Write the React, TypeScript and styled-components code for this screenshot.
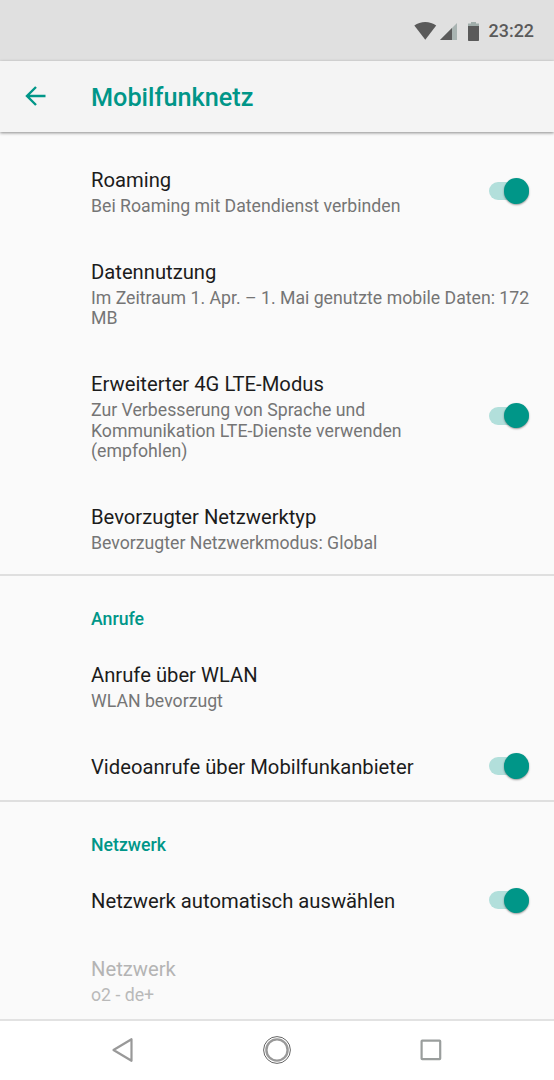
import React from 'react';
import styled, { createGlobalStyle } from 'styled-components';

const GlobalStyle = createGlobalStyle`
  * {
    box-sizing: border-box;
  }
  body {
    margin: 0;
    background: #fafafa;
    font-family: Roboto, sans-serif;
  }
`;

const Screen = styled.div`
  display: flex;
  flex-direction: column;
  width: 554px;
  height: 1080px;
  overflow: hidden;
  background: #fafafa;
`;

const StatusBar = styled.div`
  display: flex;
  flex: none;
  align-items: center;
  justify-content: flex-end;
  height: 61px;
  padding-right: 20px;
  background: #e0e0e0;
  color: #5a5a5a;
`;

const Clock = styled.span`
  margin-left: 9px;
  font-size: 17.9px;
  font-weight: 500;
  line-height: 24px;
`;

const AppBar = styled.header`
  display: flex;
  flex: none;
  align-items: center;
  height: 71px;
  padding: 0 0 1px 25px;
  background: #f4f4f4;
  box-shadow: 0 1px 3px rgba(0, 0, 0, 0.45);
  z-index: 1;
`;

const AppTitle = styled.h1`
  margin: 3px 0 0 45px;
  color: #009688;
  font-size: 25.25px;
  font-weight: 500;
  line-height: 30px;
`;

const Content = styled.main`
  flex: 1;
  min-height: 0;
  padding-top: 13.4px;
  overflow: hidden;
`;

const Section = styled.section`
  & + & {
    border-top: 2px solid #dfdfdf;
  }
`;

const SectionTitle = styled.h2`
  margin: 0;
  padding: 31.6px 0 9.6px 91px;
  color: #009688;
  font-size: 17.7px;
  font-weight: 500;
  line-height: 23px;
`;

const Row = styled.div<{ $disabled?: boolean }>`
  display: flex;
  align-items: center;
  padding: 21.8px 24px 20.4px 91px;
  color: ${({ $disabled }) => ($disabled ? '#b4b4b4' : '#1c1c1c')};
`;

const RowText = styled.div`
  flex: 1;
`;

const RowTitle = styled.div`
  font-size: 20.23px;
  line-height: 26px;
`;

const Summary = styled.div<{ $disabled?: boolean }>`
  margin-top: 2.8px;
  color: ${({ $disabled }) => ($disabled ? '#b9b9b9' : '#757575')};
  font-size: 17.7px;
  line-height: 20.7px;
`;

const Track = styled.div`
  display: flex;
  flex: none;
  align-items: center;
  justify-content: flex-end;
  width: 40px;
  height: 18px;
  margin: 0 1px 2px 24px;
  border-radius: 9px;
  background: #b2dfdb;
`;

const Thumb = styled.div`
  width: 25.5px;
  height: 25.5px;
  flex: none;
  border-radius: 50%;
  background: #009688;
  box-shadow: 0 1px 2px rgba(0, 0, 0, 0.4);
`;

const NavBar = styled.nav`
  display: flex;
  flex: none;
  align-items: center;
  justify-content: space-between;
  height: 61px;
  padding: 0 108px 2px;
  border-top: 2px solid #e2e2e2;
  background: #fff;
`;

type ItemType = {
  title: string,
  summary?: string,
  toggle?: boolean,
  disabled?: boolean
}

type SectionType = {
  name?: string,
  items: ItemType[]
}

const sections: SectionType[] = [
  {
    items: [
      { title: 'Roaming', summary: 'Bei Roaming mit Datendienst verbinden', toggle: true },
      { title: 'Datennutzung', summary: 'Im Zeitraum 1. Apr. – 1. Mai genutzte mobile Daten: 172 MB' },
      {
        title: 'Erweiterter 4G LTE-Modus',
        summary: 'Zur Verbesserung von Sprache und Kommunikation LTE-Dienste verwenden (empfohlen)',
        toggle: true
      },
      { title: 'Bevorzugter Netzwerktyp', summary: 'Bevorzugter Netzwerkmodus: Global' }
    ]
  },
  {
    name: 'Anrufe',
    items: [
      { title: 'Anrufe über WLAN', summary: 'WLAN bevorzugt' },
      { title: 'Videoanrufe über Mobilfunkanbieter', toggle: true }
    ]
  },
  {
    name: 'Netzwerk',
    items: [
      { title: 'Netzwerk automatisch auswählen', toggle: true },
      { title: 'Netzwerk', summary: 'o2 - de+', disabled: true }
    ]
  }
];

const StatusIcons = () => (
  <svg width="66" height="20" viewBox="414 20 66 20">
    <path d="M414.3 24.6C420.5 19.9 430 19.9 436.2 24.6L425.3 38.8Z" fill="#5a5a5a" />
    <path d="M457 22V39H440Z" fill="#a9b4b2" />
    <path d="M452 27V39H440Z" fill="#5a5a5a" />
    <path d="M471 21H476V22.5H479V25H468V22.5H471Z" fill="#a0adaa" />
    <path d="M468 25H479V39.2Q479 40 478.2 40H468.8Q468 40 468 39.2Z" fill="#5a5a5a" />
  </svg>
);

const BackArrow = () => (
  <svg width="21" height="20" viewBox="0 0 21 20" fill="none" stroke="#009688" strokeWidth="2.4">
    <path d="M20.5 10H2M11 1L2 10L11 19" />
  </svg>
);

const Item = ({ title, summary, toggle, disabled }: ItemType) => (
  <Row $disabled={disabled}>
    <RowText>
      <RowTitle>{title}</RowTitle>
      {summary && <Summary $disabled={disabled}>{summary}</Summary>}
    </RowText>
    {toggle && (
      <Track>
        <Thumb />
      </Track>
    )}
  </Row>
);

const App = () => {
  return (
    <Screen>
      <GlobalStyle />
      <StatusBar>
        <StatusIcons />
        <Clock>23:22</Clock>
      </StatusBar>
      <AppBar>
        <BackArrow />
        <AppTitle>Mobilfunknetz</AppTitle>
      </AppBar>
      <Content>
        {sections.map((section, index) => (
          <Section key={index}>
            {section.name && <SectionTitle>{section.name}</SectionTitle>}
            {section.items.map((item) => (
              <Item key={item.title} {...item} />
            ))}
          </Section>
        ))}
      </Content>
      <NavBar>
        <svg width="30" height="30" viewBox="0 0 30 30" fill="none" stroke="#999" strokeWidth="2.2" strokeLinejoin="round">
          <path d="M23.5 4.2V25.8L5.5 15Z" />
        </svg>
        <svg width="30" height="30" viewBox="0 0 30 30" fill="none">
          <circle cx="15" cy="15" r="13.4" stroke="#666" strokeWidth="1" />
          <circle cx="15" cy="15" r="10.6" stroke="#999" strokeWidth="2.4" />
        </svg>
        <svg width="30" height="30" viewBox="0 0 30 30" fill="none" stroke="#9a9e9d" strokeWidth="2.2">
          <rect x="5.6" y="5.6" width="18.6" height="18.6" rx="0.6" />
        </svg>
      </NavBar>
    </Screen>
  );
};

export default App;
